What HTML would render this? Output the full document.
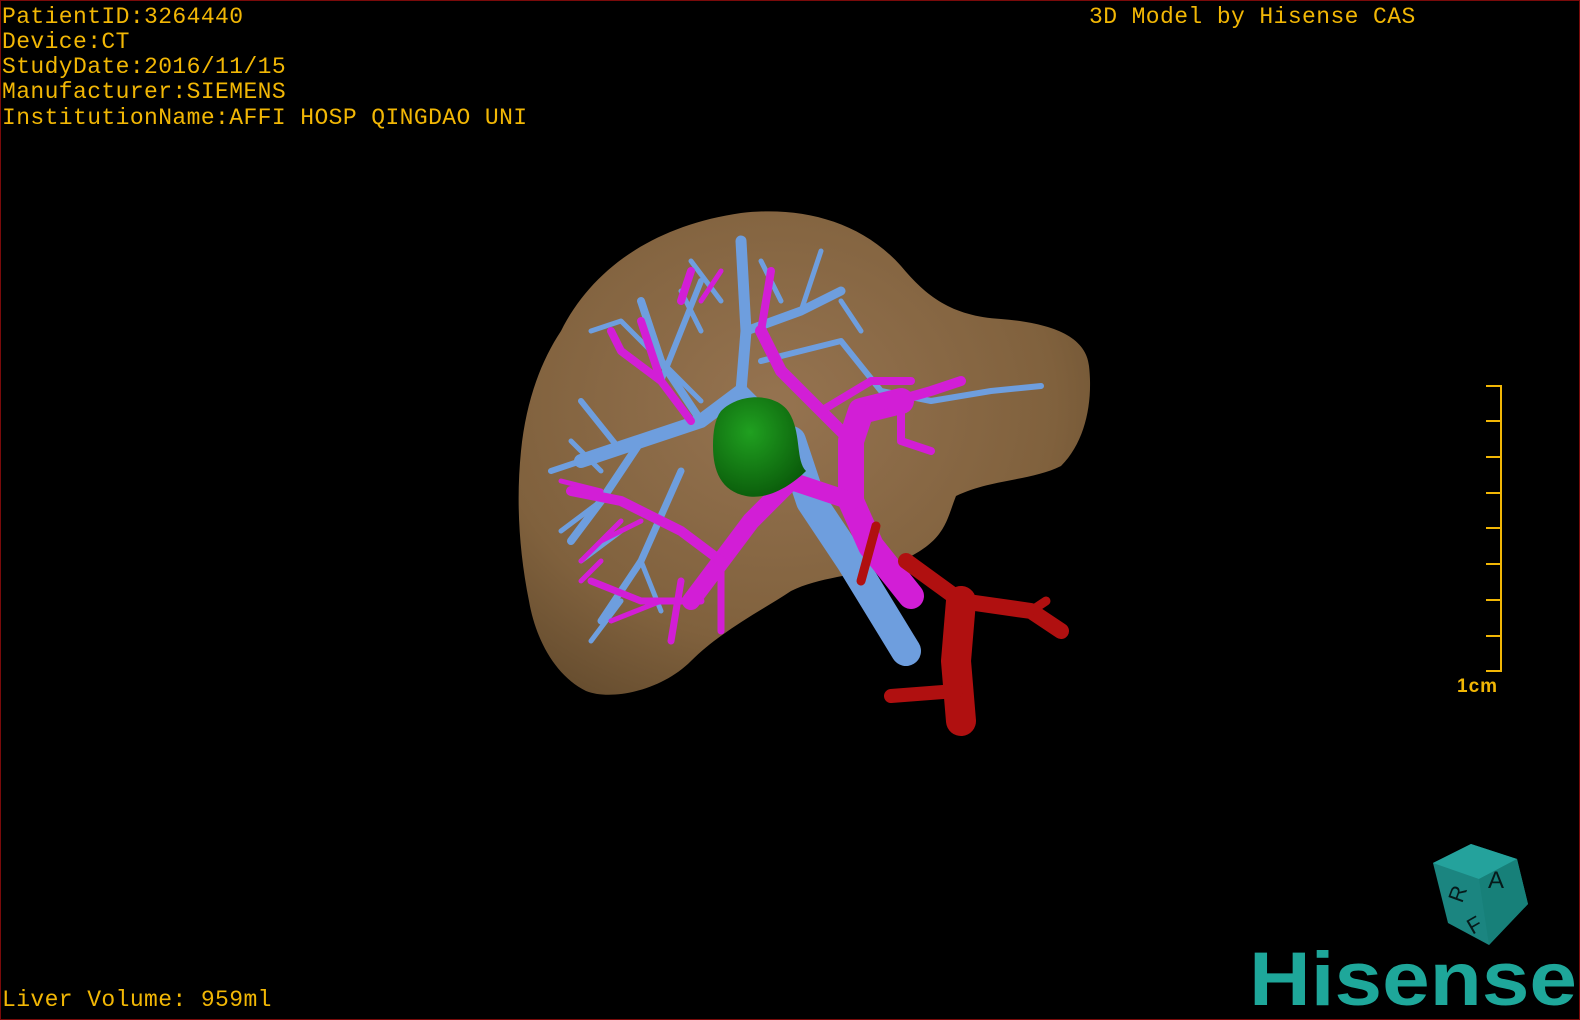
<!DOCTYPE html>
<html><head><meta charset="utf-8"><style>
html,body{margin:0;padding:0;background:#000;}
#f{position:relative;width:1580px;height:1020px;background:#000;overflow:hidden;box-sizing:border-box;border:1px solid #7a0a0a;}
.t{position:absolute;left:1px;color:#f2b705;font-family:"Liberation Mono",monospace;font-size:23px;line-height:25px;white-space:pre;letter-spacing:0.4px;}
svg{position:absolute;left:0;top:0;}
</style></head><body><div id="f">
<svg width="1580" height="1020" viewBox="0 0 1580 1020">
<defs>
<radialGradient id="lv" cx="0.45" cy="0.4" r="0.7"><stop offset="0" stop-color="#957350"/><stop offset="0.7" stop-color="#80613d"/><stop offset="1" stop-color="#654c2e"/></radialGradient>
<radialGradient id="gr" cx="0.4" cy="0.35" r="0.7"><stop offset="0" stop-color="#20a020"/><stop offset="1" stop-color="#0a5a0a"/></radialGradient>
</defs>
<path d="M560,330 C590,270 650,225 740,212 C800,205 860,220 900,265 C925,295 950,315 1000,318 C1050,322 1085,335 1088,365 C1092,400 1085,440 1060,465 C1030,480 990,478 955,495 C945,520 945,540 900,560 C860,575 820,575 790,590 C760,610 720,630 690,660 C660,690 610,700 585,690 C555,675 535,640 528,600 C518,550 515,500 520,450 C525,400 540,360 560,330 Z" fill="url(#lv)"/>
<g fill="none" stroke="#6e9ede" stroke-linecap="round" stroke-linejoin="round">
<path d="M905,650 L850,560 L810,500 L790,440" stroke-width="30"/>
<path d="M790,440 L740,390 L700,420 L640,440 L580,460" stroke-width="14"/>
<path d="M740,390 L745,330 L740,240" stroke-width="11"/>
<path d="M745,330 L800,310 L840,290" stroke-width="9"/>
<path d="M700,420 L660,360 L640,300" stroke-width="8"/>
<path d="M640,440 L600,500 L570,540" stroke-width="8"/>
<path d="M680,470 L640,560 L600,620" stroke-width="7"/>
<path d="M580,460 L550,470 M620,450 L580,400 M660,380 L700,280 M760,360 L840,340 L880,390 L930,400 L990,390 L1040,385" stroke-width="6"/>
<path d="M800,310 L820,250 M720,300 L690,260 M600,500 L560,530 M640,560 L660,610 M620,600 L590,640 M700,400 L620,320 L590,330 M700,330 L680,290 M780,300 L760,260 M860,330 L840,300 M600,470 L570,440 M620,530 L580,560" stroke-width="5"/>
</g>
<g fill="none" stroke="#d21ed6" stroke-linecap="round" stroke-linejoin="round">
<path d="M910,595 L870,545 L850,500 L850,440 L860,410 L900,400" stroke-width="26"/>
<path d="M850,500 L790,480 L750,520 L720,560 L690,600" stroke-width="18"/>
<path d="M850,440 L820,410 L780,370 L760,330" stroke-width="12"/>
<path d="M860,410 L930,390 L960,380" stroke-width="10"/>
<path d="M900,400 L900,440 L930,450" stroke-width="8"/>
<path d="M720,560 L680,530 L620,500 L570,490" stroke-width="10"/>
<path d="M700,600 L640,600 L590,580 M720,560 L720,630 M680,580 L670,640" stroke-width="7"/>
<path d="M690,420 L660,380 L640,320 M660,380 L620,350 L610,330 M680,300 L690,270 M760,330 L770,270 M820,410 L870,380 L910,380" stroke-width="8"/>
<path d="M600,490 L560,480 M620,520 L580,560 M660,600 L610,620 M580,580 L600,560 M640,520 L600,540 M700,300 L720,270" stroke-width="5"/>
</g>
<path d="M720,410 C740,390 780,392 790,415 C800,435 795,460 805,470 C795,480 770,500 745,495 C720,490 712,470 712,445 C712,430 714,418 720,410 Z" fill="url(#gr)"/>
<g fill="none" stroke="#b01010" stroke-linecap="round" stroke-linejoin="round">
<path d="M875,525 L860,580" stroke-width="9"/>
<path d="M905,560 L960,600 L1030,610 L1060,630" stroke-width="16"/>
<path d="M960,600 L955,660 L960,720" stroke-width="30"/>
<path d="M955,690 L890,695" stroke-width="14"/>
<path d="M1030,610 L1045,600" stroke-width="9"/>
</g>
<g stroke="#f2b705" stroke-width="2" fill="none">
<path d="M1485,385 H1500 V670 H1485"/>
<path d="M1485,420 H1500 M1485,456 H1500 M1485,492 H1500 M1485,527 H1500 M1485,563 H1500 M1485,599 H1500 M1485,635 H1500"/>
</g>
<text x="1456" y="691" fill="#f2b705" font-family="Liberation Sans,sans-serif" font-size="19" font-weight="bold" letter-spacing="1">1cm</text>
<g>
<polygon points="1432,862 1470,843 1516,858 1527,903 1488,944 1447,922" fill="#1b8580"/>
<polygon points="1432,862 1470,843 1516,858 1478,878" fill="#24a29c"/>
<polygon points="1478,878 1516,858 1527,903 1488,944" fill="#178079"/>
<text x="1487" y="887" fill="#061a1a" font-family="Liberation Sans,sans-serif" font-size="24">A</text>
<text x="1445" y="900" fill="#061a1a" font-family="Liberation Sans,sans-serif" font-size="22" transform="rotate(-70 1455 890)">R</text>
<text x="1466" y="930" fill="#061a1a" font-family="Liberation Sans,sans-serif" font-size="22" transform="rotate(-30 1476 922)">F</text>
</g>
<text x="1248" y="1004" fill="#1ea79a" font-family="Liberation Sans,sans-serif" font-size="76" font-weight="bold" textLength="328" lengthAdjust="spacingAndGlyphs">Hisense</text>
</svg>
<div class="t" style="top:4px">PatientID:3264440</div>
<div class="t" style="top:29px">Device:CT</div>
<div class="t" style="top:54px">StudyDate:2016/11/15</div>
<div class="t" style="top:79px">Manufacturer:SIEMENS</div>
<div class="t" style="top:105px">InstitutionName:AFFI HOSP QINGDAO UNI</div>
<div class="t" style="top:4px;left:1088px">3D Model by Hisense CAS</div>
<div class="t" style="top:987px">Liver Volume: 959ml</div>
</div></body></html>
